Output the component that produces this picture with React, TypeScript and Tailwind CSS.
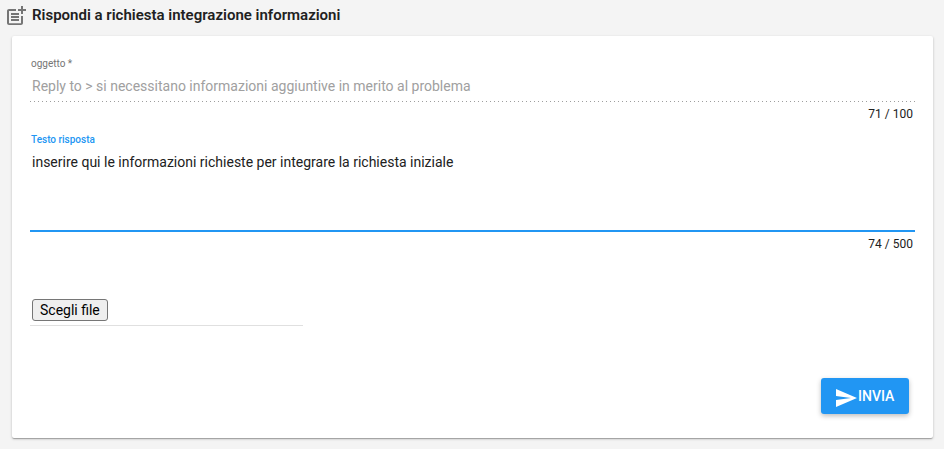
import { useState } from "react";
import { MdPostAdd, MdSend } from "react-icons/md";

const SUBJECT = "Reply to > si necessitano informazioni aggiuntive in merito al problema";
const INITIAL_REPLY = "inserire qui le informazioni richieste per integrare la richiesta iniziale";

function Counter({ used, max }: { used: number; max: number }) {
  return (
    <div className="px-0.5 pt-1 text-right text-xs leading-4">
      {used} / {max}
    </div>
  );
}

export default function App() {
  const [reply, setReply] = useState(INITIAL_REPLY);

  return (
    <main className="min-h-screen bg-[#f4f4f4] pb-[11px] font-[Roboto,sans-serif] text-[#212121]">
      <header className="flex h-9 items-start gap-1 px-1 pt-1">
        <MdPostAdd className="size-6 text-[#757575]" aria-hidden="true" />
        <h1 className="text-[15px] leading-[22px] font-semibold">Rispondi a richiesta integrazione informazioni</h1>
      </header>

      <form
        className="mr-[11px] ml-3 flex flex-col rounded-xs bg-white px-[18px] pt-5 pb-6 shadow-[0_1px_3px_0_rgba(0,0,0,0.2),0_1px_1px_0_rgba(0,0,0,0.14),0_2px_1px_-1px_rgba(0,0,0,0.12)]"
        onSubmit={(e) => e.preventDefault()}
      >
        <div className="flex flex-col">
          <label htmlFor="subject" className="px-px text-[10px] leading-4 text-[#757575]">
            oggetto *
          </label>
          <input
            id="subject"
            disabled
            value={SUBJECT}
            className="h-[30px] w-full bg-[linear-gradient(to_right,#9e9e9e_0,#9e9e9e_33%,transparent_0)] bg-[length:4px_1px] bg-bottom-left bg-repeat-x px-0.5 pb-0.5 text-sm text-[#a0a0a0]"
          />
          <Counter used={71} max={100} />
        </div>

        <div className="flex flex-col pt-2.5">
          <label htmlFor="reply" className="px-px text-[10px] leading-4 font-medium text-[#2196f3]">
            Testo risposta
          </label>
          <textarea
            id="reply"
            value={reply}
            maxLength={500}
            onChange={(e) => setReply(e.target.value)}
            className="h-[84px] w-full resize-none border-b-2 border-[#2196f3] px-0.5 pt-1 text-sm leading-5 outline-none"
          />
          <Counter used={reply.length} max={500} />
        </div>

        <div className="mt-[47px] w-[273px] border-b border-[#e0e0e0] px-0.5 pb-1">
          <button
            type="button"
            className="block h-[22px] rounded-[3px] border border-[#767676] bg-[#efefef] px-[7px] text-sm leading-5 font-[Roboto,sans-serif] text-black"
          >
            Scegli file
          </button>
        </div>

        <div className="mt-[52px] flex justify-end pr-1.5">
          <button
            type="submit"
            className="flex h-9 min-w-[88px] items-center justify-start rounded-[3px] bg-[#2196f3] px-[13px] text-sm font-medium text-white shadow-[0_2px_5px_0_rgba(0,0,0,0.26)]"
          >
            <MdSend className="mt-1 size-6" aria-hidden="true" />
            INVIA
          </button>
        </div>
      </form>
    </main>
  );
}
